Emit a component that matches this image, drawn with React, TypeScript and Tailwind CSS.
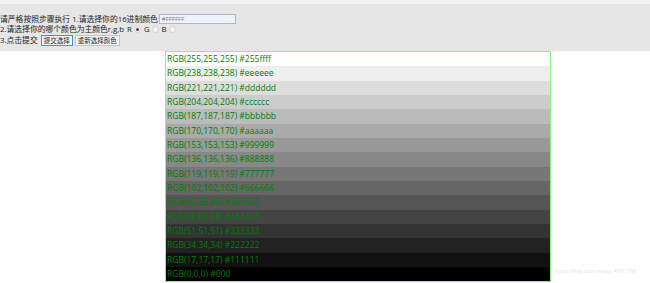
const shades = [255, 238, 221, 204, 187, 170, 153, 136, 119, 102, 85, 68, 51, 34, 17, 0]

function hexOf(v: number) {
  if (v === 255) return '#255ffff'
  if (v === 0) return '#000'
  const h = v.toString(16)
  return '#' + h + h + h
}

function Radio({ checked }: { checked?: boolean }) {
  return (
    <span className="inline-flex w-[7px] h-[7px] rounded-full border border-[#d0d0d0] bg-[#f4f4f4] items-center justify-center mx-[2px]">
      {checked && <span className="w-[3px] h-[3px] rounded-full bg-[#444]" />}
    </span>
  )
}

export default function App() {
  return (
    <div className="w-[650px] h-[283px] bg-white overflow-hidden relative text-[7.8px] leading-[10px] text-[#222]"
      style={{ fontFamily: '"Open Sans","Noto Sans CJK SC",sans-serif' }}>
      <div className="h-[4px] bg-[#f2f2f2]" />
      <div className="h-[47px] bg-[#e6e6e6] pt-[10px] flex flex-col">
        <div className="flex items-center h-[10px]">
          <span>请严格按照步骤执行 1.请选择你的16进制颜色</span>
          <span className="ml-[1px] w-[77px] h-[10px] border border-[#a9b8d0] bg-[#eef2fb] text-[#777] text-[6px] leading-[8px] pl-[2px]">#FFFFFF</span>
        </div>
        <div className="flex items-center h-[10px]">
          <span>2.请选择你的哪个颜色为主颜色r,g,b</span>
          <span className="ml-[3px]">R</span><Radio checked />
          <span className="ml-[1px]">G</span><Radio />
          <span className="ml-[1px]">B</span><Radio />
        </div>
        <div className="flex items-center h-[12px]">
          <span>3.点击提交</span>
          <span className="ml-[3px] h-[11px] px-[2px] border border-[#4f8ad8] bg-[#f4f4f4] text-[6.5px] leading-[9px]">提交选择</span>
          <span className="ml-[2px] h-[11px] px-[2px] border border-[#c4c4c4] bg-[#f4f4f4] text-[6.5px] leading-[9px]">重新选择颜色</span>
        </div>
      </div>
      <div className="ml-[165px] w-[386px] border border-[#90ee90] flex flex-col">
        {shades.map((v) => (
          <div key={v} className="h-[14.33px] text-[#008000] text-[8.5px] leading-[14.33px] pl-[1px]"
            style={{ backgroundColor: `rgb(${v},${v},${v})` }}>
            RGB({v},{v},{v}) {hexOf(v)}
          </div>
        ))}
      </div>
      <div className="absolute left-[555px] top-[268px] text-[5px] leading-[6px] text-[#e4e4e4]">
        https://blog.csdn.net/qq_40811158
      </div>
    </div>
  )
}
